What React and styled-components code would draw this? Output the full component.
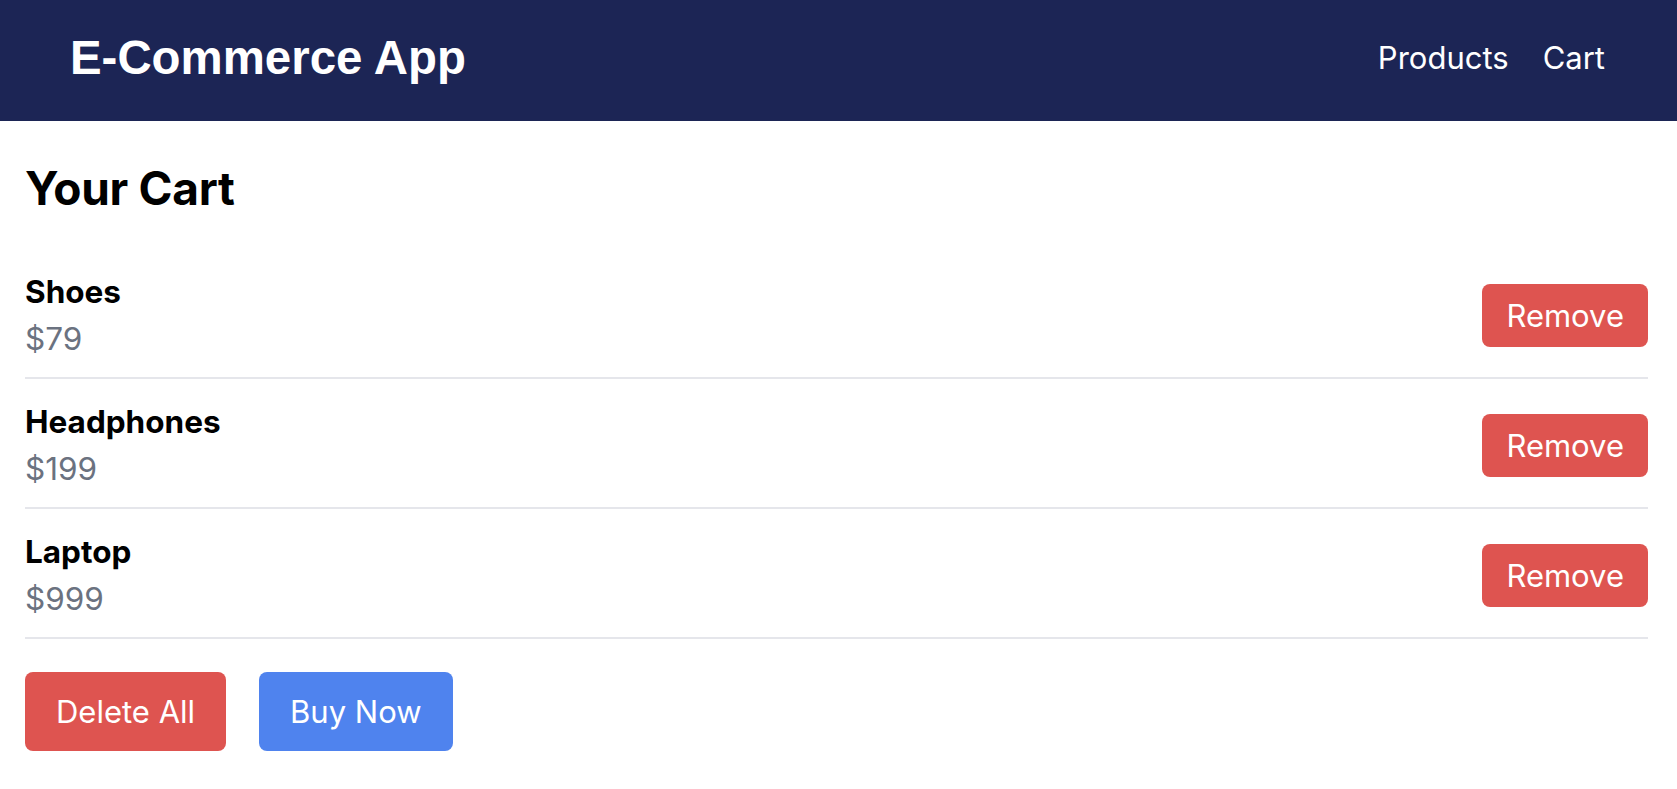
import React, { useState } from "react";
import styled, { createGlobalStyle } from "styled-components";

const red = "#de5450";
const blue = "#4f83ee";
const navy = "#1c2555";

const GlobalStyle = createGlobalStyle`
  html, body {
    margin: 0;
    padding: 0;
    background: #ffffff;
  }
  body {
    font-family: Inter, "Noto Sans", sans-serif;
    color: #000000;
  }
`;

const initialItems = [
  { id: 1, name: "Shoes", price: 79 },
  { id: 2, name: "Headphones", price: 199 },
  { id: 3, name: "Laptop", price: 999 },
];

const Header = () => (
  <Bar>
    <Brand>E-Commerce App</Brand>
    <Nav>
      <NavLink href="#products">Products</NavLink>
      <NavLink href="#cart">Cart</NavLink>
    </Nav>
  </Bar>
);

const CartRow = ({ item, onRemove }) => (
  <Row>
    <Info>
      <Name>{item.name}</Name>
      <Price>${item.price}</Price>
    </Info>
    <Button color={red} size="small" onClick={() => onRemove(item.id)}>
      Remove
    </Button>
  </Row>
);

const App = () => {
  const [items, setItems] = useState(initialItems);

  const onRemove = id => {
    setItems(items.filter(item => item.id !== id));
  };

  return (
    <>
      <GlobalStyle />
      <Header />
      <Main>
        <Title>Your Cart</Title>
        <List>
          {items.map(item => (
            <CartRow key={item.id} item={item} onRemove={onRemove} />
          ))}
        </List>
        <Actions>
          <Button color={red} onClick={() => setItems([])}>
            Delete All
          </Button>
          <Button color={blue}>Buy Now</Button>
        </Actions>
      </Main>
    </>
  );
};

const Bar = styled.header`
  display: flex;
  align-items: center;
  justify-content: space-between;
  height: 121px;
  padding: 0 72px 0 70px;
  background: ${navy};
  box-sizing: border-box;
`;

const Brand = styled.h1`
  margin: 0 0 6px;
  font-family: "Liberation Sans", Arial, sans-serif;
  font-size: 47.4px;
  font-weight: bold;
  color: #ffffff;
`;

const Nav = styled.nav`
  display: flex;
  align-items: center;
  gap: 34px;
  margin-bottom: 6px;
`;

const NavLink = styled.a`
  font-size: 31px;
  color: #ffffff;
  text-decoration: none;
`;

const Main = styled.main`
  padding: 39px 29px 40px 25px;
`;

const Title = styled.h2`
  margin: 0 0 33px;
  font-size: 46px;
  font-weight: 700;
  line-height: 56px;
  letter-spacing: -0.3px;
`;

const List = styled.ul`
  margin: 0;
  padding: 0;
  list-style: none;
`;

const Row = styled.li`
  display: flex;
  align-items: center;
  justify-content: space-between;
  padding: 24px 0 19px;
  border-bottom: 2px solid #e5e6eb;
`;

const Info = styled.div`
  display: flex;
  flex-direction: column;
  gap: 9px;
`;

const Name = styled.span`
  font-size: 31.5px;
  font-weight: 700;
  line-height: 38px;
`;

const Price = styled.span`
  font-size: 31.5px;
  line-height: 38px;
  color: #6b7280;
`;

const Actions = styled.div`
  display: flex;
  gap: 33px;
  margin-top: 33px;
`;

const Button = styled.button`
  padding: ${props => (props.size === "small" ? "13px 24px" : "21px 31px")};
  font-family: Inter, "Noto Sans", sans-serif;
  font-size: 31px;
  line-height: 37px;
  color: #ffffff;
  background: ${props => props.color};
  border: none;
  border-radius: 8px;
  cursor: pointer;
`;

export default App;
